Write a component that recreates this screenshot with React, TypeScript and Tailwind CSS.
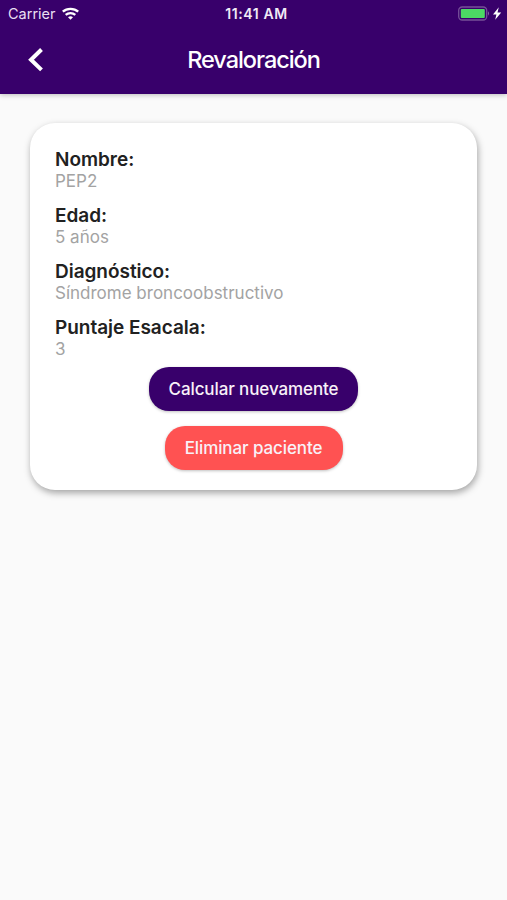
const fields = [
  { label: 'Nombre:', value: 'PEP2' },
  { label: 'Edad:', value: '5 años' },
  { label: 'Diagnóstico:', value: 'Síndrome broncoobstructivo' },
  { label: 'Puntaje Esacala:', value: '3' },
];

function StatusBar() {
  return (
    <div className="grid h-[27px] grid-cols-[1fr_70px_1fr] items-center px-2 text-[14.5px] leading-[27px]">
      <div className="flex items-center gap-[7px]">
        <span className="w-[47px] leading-[25px] text-[#e9dff2]">Carrier</span>
        <svg className="-mt-px" width="17" height="13" viewBox="0 0 17 13" fill="none" stroke="white" strokeWidth="2.3">
          <path d="M0.8 4.7C5 0.8 12 0.8 16.2 4.7" />
          <path d="M3.7 7.9C6.4 5.5 10.6 5.5 13.3 7.9" />
          <path d="M8.5 12.8 6 10.2Q8.5 8.2 11 10.2Z" fill="white" stroke="none" />
        </svg>
      </div>
      <span className="ml-[6px] text-center text-[14px] leading-[27px] font-semibold tracking-[0.6px] whitespace-nowrap text-[#f1eaf6]">11:41 AM</span>
      <div className="-mr-[3px] flex items-center justify-end">
        <svg className="-mt-px" width="44" height="15" viewBox="0 0 44 15">
          <rect x="0.7" y="1" width="28" height="13" rx="3.5" fill="none" stroke="#765098" strokeWidth="1.3" />
          <rect x="2.8" y="3" width="24" height="9" rx="1" fill="#4cd964" />
          <path d="M30 5.3Q32 7.5 30 9.7Z" fill="#8a68a8" />
          <path d="M40.8 1.2 35 8.5h3.4L37.2 13.8l6-7.3h-3.7Z" fill="white" />
        </svg>
      </div>
    </div>
  );
}

export default function App() {
  return (
    <div className="flex h-[900px] w-[507px] flex-col bg-[#fafafa] font-['Inter','Liberation_Sans',sans-serif]">
      <header className="h-[94px] bg-[#38006b] text-white shadow-[0_1px_5px_rgba(0,0,0,0.25)]">
        <StatusBar />
        <div className="grid h-[66px] grid-cols-[70px_1fr_70px] items-center">
          <svg className="ml-[27px]" width="18" height="26" viewBox="0 0 18 26" fill="none" stroke="white" strokeWidth="4">
            <path d="M14.5 2.5 4 12.7l10.5 10.2" />
          </svg>
          <h1 className="text-center text-[23.5px] font-medium tracking-[-1.05px]">Revaloración</h1>
        </div>
      </header>
      <main className="mx-[30px] mt-[29px] h-[367px] rounded-[25px] bg-white px-[25px] pt-[25px] shadow-[1px_3px_7px_rgba(0,0,0,0.35)]">
        <dl className="flex flex-col gap-[12px]">
          {fields.map((f) => (
            <div key={f.label} className="h-[44px]">
              <dt className="h-[22px] text-[19px] leading-[24px] font-semibold tracking-[-0.03px] text-[#212121]">{f.label}</dt>
              <dd className="text-[17px] leading-[22px] text-[#a3a3a3]">{f.value}</dd>
            </div>
          ))}
        </dl>
        <div className="mt-[7px] flex flex-col items-center gap-[15px] text-[17px] font-medium tracking-[-0.1px] text-[#f8f1f8]">
          <button className="h-[44px] w-[209px] rounded-[20px] bg-[#38006b] pt-[2px] shadow-[0_1px_3px_rgba(0,0,0,0.25)]">Calcular nuevamente</button>
          <button className="h-[44px] w-[178px] rounded-[20px] bg-[#ff5252] pt-[2px] shadow-[0_1px_3px_rgba(0,0,0,0.25)]">Eliminar paciente</button>
        </div>
      </main>
    </div>
  );
}
